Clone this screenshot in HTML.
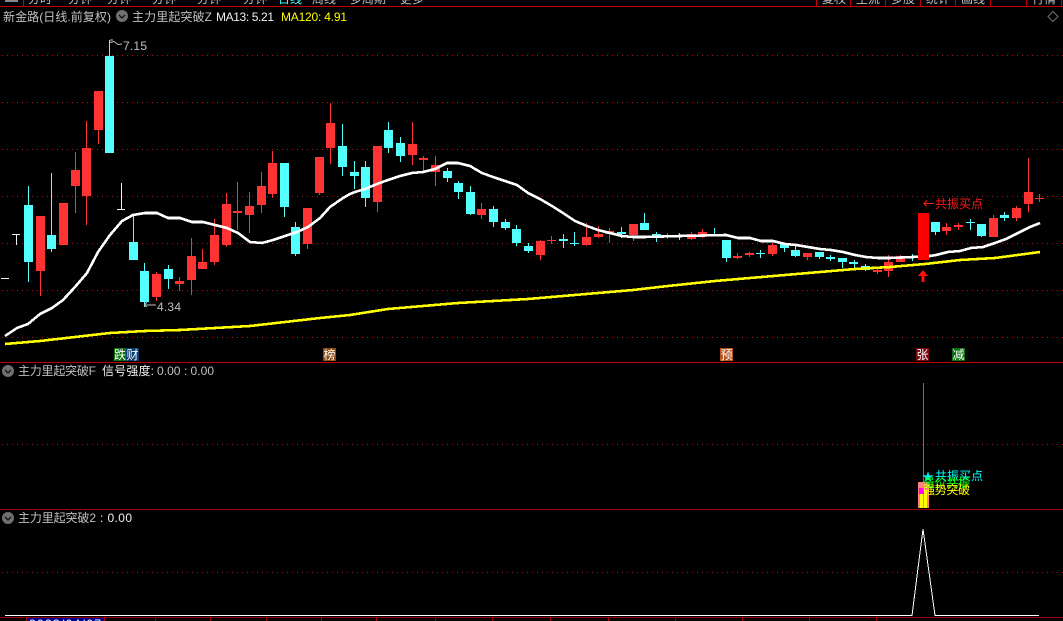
<!DOCTYPE html>
<html><head><meta charset="utf-8"><style>
html,body{margin:0;padding:0;background:#000;width:1063px;height:621px;overflow:hidden}
svg{display:block}
text{font-family:"Liberation Sans","WenQuanYi Zen Hei","Noto Sans CJK SC",sans-serif;font-size:12px}
</style></head><body>
<svg width="1063" height="621" viewBox="0 0 1063 621" xmlns="http://www.w3.org/2000/svg">
<rect width="1063" height="621" fill="#000"/>
<g font-size="12" fill="#c0c0c0">
<text x="28" y="3">分时</text><text x="68" y="3">分钟</text><text x="107" y="3">分钟</text><text x="152" y="3">分钟</text><text x="197" y="3">分钟</text><text x="243" y="3">分钟</text><text x="278" y="3" fill="#54ffff">日线</text><text x="312" y="3">周线</text><text x="350" y="3">多周期</text><text x="400" y="3">更多</text>
<text x="822" y="3">复权</text><text x="856" y="3">主流</text><text x="891" y="3">多股</text><text x="926" y="3">统计</text><text x="961" y="3">画线</text><text x="1032" y="3">行情</text>
</g>
<rect x="5" y="0" width="13" height="2" fill="#888"/>
<g shape-rendering="crispEdges" fill="#c00000">
<rect x="0" y="6" width="1063" height="1"/><rect x="23" y="0" width="1" height="6"/>
<rect x="816" y="0" width="1" height="6"/><rect x="850" y="0" width="1" height="6"/><rect x="885" y="0" width="1" height="6"/><rect x="920" y="0" width="1" height="6"/><rect x="955" y="0" width="1" height="6"/><rect x="990" y="0" width="1" height="6"/><rect x="1026" y="0" width="1" height="6"/><rect x="1061" y="0" width="1" height="6"/>
<rect x="0" y="362" width="1063" height="1"/>
<rect x="0" y="509" width="1063" height="1" fill="#a00000"/>
<rect x="0" y="617" width="1063" height="1" fill="#a00000"/>
</g>
<path d="M2 55.5H1063M2 102.5H1063M2 149.5H1063M2 196.5H1063M2 243.5H1063M2 290.5H1063M2 337.5H1063M2 444.5H1063M2 572.5H1063" stroke="#b01515" stroke-width="1" stroke-dasharray="1 4" fill="none" shape-rendering="crispEdges"/>

<!-- doji whites -->
<path d="M1 278.5H9M16.5 234V245M12 234.5H20M121.5 183V209M117 209.5H125" stroke="#f0f0f0" fill="none" shape-rendering="crispEdges"/>

<!-- wicks red -->
<path stroke="#ff3333" fill="none" shape-rendering="crispEdges" d="M40.5 216V296M75.5 152V213M86.5 121V225M98.5 91V144M156.5 272V301M179.5 277V291M191.5 238V295M202.5 249V262M214.5 219V265M226.5 193V247M237.5 182V230M249.5 192V233M261.5 172V213M272.5 151V198M307.5 208V249M319.5 157V195M330.5 103V164M377.5 146V212M412.5 122V165M423.5 156V171M435.5 156V186M481.5 203V219M540.5 240V260M551.5 236V244M586.5 223V246M598.5 226V238M609.5 228V243M633.5 224V241M667.5 233V239M691.5 232V240M702.5 229V238M737.5 253V259M749.5 252V257M772.5 243V256M807.5 253V260M877.5 268V274M888.5 255V277M900.5 255V262M946.5 223V235M958.5 223V230M993.5 215V237M1016.5 206V221M1028.5 158V212M1039.5 194V202"/>
<!-- bodies red -->
<path fill="#ff3333" shape-rendering="crispEdges" d="M36 216h9v55h-9zM59 203h9v42h-9zM71 170h9v16h-9zM82 148h9v48h-9zM94 91h9v39h-9zM152 274h9v23h-9zM175 281h9v3h-9zM187 256h9v24h-9zM198 262h9v7h-9zM210 235h9v27h-9zM222 204h9v41h-9zM233 211h9v2h-9zM245 206h9v9h-9zM257 186h9v19h-9zM268 163h9v31h-9zM303 208h9v36h-9zM315 157h9v36h-9zM326 123h9v25h-9zM373 146h9v56h-9zM408 144h9v11h-9zM419 158h9v2h-9zM431 165h9v7h-9zM477 209h9v6h-9zM536 241h9v14h-9zM547 240h9v1h-9zM582 237h9v8h-9zM594 234h9v3h-9zM605 231h9v3h-9zM629 224h9v11h-9zM663 235h9v1h-9zM687 234h9v5h-9zM698 232h9v5h-9zM733 256h9v2h-9zM745 253h9v2h-9zM768 245h9v9h-9zM803 253h9v4h-9zM873 270h9v2h-9zM884 262h9v9h-9zM896 256h9v6h-9zM942 227h9v4h-9zM954 225h9v2h-9zM989 218h9v19h-9zM1012 208h9v10h-9zM1024 192h9v12h-9zM1035 198h9v1h-9z"/>
<!-- wicks cyan -->
<path stroke="#54ffff" fill="none" shape-rendering="crispEdges" d="M28.5 186V282M51.5 173V252M109.5 40V153M133.5 216V260M144.5 263V307M168.5 265V289M284.5 163V217M295.5 222V256M342.5 124V176M354.5 161V189M365.5 161V207M388.5 122V153M400.5 137V162M447.5 168V182M458.5 181V199M470.5 186V215M493.5 206V227M505.5 219V230M516.5 225V246M528.5 243V253M563.5 234V248M574.5 232V246M621.5 227V238M644.5 213V230M656.5 232V242M679.5 233V240M714.5 228V235M726.5 240V262M760.5 250V258M784.5 244V252M795.5 245V257M819.5 252V259M830.5 255V261M842.5 258V268M854.5 260V268M865.5 264V271M912.5 254V261M935.5 222V235M970.5 219V230M981.5 224V237M1004.5 212V221"/>
<!-- bodies cyan -->
<path fill="#54ffff" shape-rendering="crispEdges" d="M24 205h9v57h-9zM47 235h9v14h-9zM105 56h9v97h-9zM129 242h9v18h-9zM140 271h9v31h-9zM164 269h9v10h-9zM280 163h9v44h-9zM291 227h9v27h-9zM338 146h9v21h-9zM350 172h9v4h-9zM361 167h9v31h-9zM384 130h9v18h-9zM396 143h9v13h-9zM443 171h9v7h-9zM454 183h9v9h-9zM466 192h9v22h-9zM489 209h9v13h-9zM501 222h9v6h-9zM512 229h9v14h-9zM524 246h9v5h-9zM559 239h9v2h-9zM570 243h9v1h-9zM617 232h9v2h-9zM640 223h9v7h-9zM652 234h9v3h-9zM675 236h9v1h-9zM710 234h9v1h-9zM722 240h9v18h-9zM756 253h9v1h-9zM780 244h9v4h-9zM791 250h9v6h-9zM815 252h9v5h-9zM826 257h9v2h-9zM838 258h9v4h-9zM849 262h9v2h-9zM861 266h9v4h-9zM908 256h9v2h-9zM931 222h9v10h-9zM966 222h9v1h-9zM977 224h9v12h-9zM1000 215h9v3h-9z"/>

<!-- MA120 -->
<polyline fill="none" stroke="#ffff00" stroke-width="2.6" shape-rendering="crispEdges" points="5,344 40,341 75,337 110,333 145,331 180,330 215,328 250,326 285,322 320,318 350,315 388,309 423,306 458,303 493,301 528,299 563,296 598,293 633,290 668,286 715,281 750,278 785,275 820,272 855,269 890,267 925,264 960,260 995,258 1040,252"/>
<!-- MA13 -->
<polyline fill="none" stroke="#ffffff" stroke-width="2.6" shape-rendering="crispEdges" points="5,336 17,328 28,324 40,314 52,308 63,300 75,287 87,273 98,252 110,235 122,221 133,215 145,213 157,213 168,218 180,218 192,222 203,222 215,225 227,228 238,233 250,242 262,243 273,240 285,236 297,232 308,227 320,218 330,207 343,198 350,194 355,192 365,189 377,184 388,180 400,176 412,173 423,172 435,169 447,163 458,163 470,166 482,173 493,177 505,181 517,185 528,193 540,199 552,206 563,213 575,221 587,226 598,230 610,233 622,236 633,237 645,237 680,236 726,235 738,238 750,238 761,241 773,241 785,244 796,245 808,247 820,249 831,250 843,252 855,255 866,257 878,258 890,258 913,257 930,256 936,255 948,252 960,251 971,248 983,247 995,243 1006,239 1018,233 1030,227 1040,223"/>
<rect x="918" y="213" width="11" height="47" fill="#ff0000" shape-rendering="crispEdges"/>

<!-- buy arrow -->
<path d="M923 270l5 6h-3.500v6h-3v-6H918z" fill="#ff1010" shape-rendering="crispEdges"/>
<path d="M924 203.500H934M927 200.500L924 203.500 927 206.500" stroke="#ff1a1a" fill="none" shape-rendering="crispEdges"/>
<text x="935" y="208" fill="#ff1a1a" textLength="48" lengthAdjust="spacing">共振买点</text>

<!-- tags -->
<g shape-rendering="crispEdges">
<rect x="114" y="348" width="12" height="13" fill="#0a7010"/><rect x="126" y="348" width="13" height="13" fill="#0a3c70"/>
<rect x="323" y="348" width="13" height="13" fill="#8a4a10"/><rect x="720" y="348" width="13" height="13" fill="#b8501a"/>
<rect x="916" y="348" width="13" height="13" fill="#7a0a10"/><rect x="952" y="348" width="13" height="13" fill="#0a7010"/>
</g>
<g fill="#fff" font-size="12">
<text x="114" y="359">跌</text><text x="126.500" y="359">财</text><text x="323.500" y="359">榜</text><text x="720.500" y="359">预</text><text x="916.500" y="359">张</text><text x="952.500" y="359">减</text>
</g>

<!-- head row -->
<text x="3" y="21" fill="#c0c0c0" font-size="13" textLength="108" lengthAdjust="spacing">新金路(日线.前复权)</text>
<circle cx="122" cy="16" r="6" fill="#707070"/><path d="M119 15l3 3 3-3" stroke="#111" stroke-width="1.300" fill="none"/>
<text x="132" y="21" fill="#c0c0c0" textLength="80" lengthAdjust="spacing">主力里起突破Z</text>
<text x="216" y="21" fill="#f0f0f0" textLength="58" lengthAdjust="spacing">MA13: 5.21</text>
<text x="281" y="21" fill="#ffff00" textLength="66" lengthAdjust="spacing">MA120: 4.91</text>
<path d="M1053 11.500l5 5-5 5-5-5z" fill="none" stroke="#707070"/>

<!-- hi/lo -->
<path d="M110 40h3M110 42.500l4-1 4 3 4-.5" stroke="#c0c0c0" fill="none"/>
<text x="123" y="50" fill="#c0c0c0" textLength="24" lengthAdjust="spacing">7.15</text>
<path d="M144 305l3-3M144 305l3 2M144 305h12" stroke="#c0c0c0" fill="none"/>
<text x="157" y="311" fill="#c0c0c0" textLength="24" lengthAdjust="spacing">4.34</text>

<!-- panel 2 -->
<circle cx="8" cy="371" r="6" fill="#707070"/><path d="M5 370l3 3 3-3" stroke="#111" stroke-width="1.300" fill="none"/>
<text x="18" y="375" fill="#c0c0c0" textLength="78" lengthAdjust="spacing">主力里起突破F</text>
<text x="102" y="375" fill="#f0f0f0" textLength="52" lengthAdjust="spacing">信号强度:</text>
<text x="157" y="375" fill="#c0c0c0" textLength="57" lengthAdjust="spacing">0.00 : 0.00</text>
<rect x="923" y="383" width="1" height="100" fill="#ff3333" shape-rendering="crispEdges"/>
<g shape-rendering="crispEdges">
<rect x="918" y="482" width="11" height="26" fill="#ff8080"/>
<rect x="919" y="488" width="5" height="6" fill="#ff00ff"/>
<rect x="920" y="494" width="3" height="14" fill="#ffff00"/><rect x="924" y="490" width="3" height="18" fill="#ffff00"/>
</g>
<text x="922" y="481" fill="#00f0f0" font-size="14">★</text>
<text x="935" y="480" fill="#00ffff" textLength="48" lengthAdjust="spacing">共振买点</text>
<text x="923" y="487" fill="#00ff00" textLength="47" lengthAdjust="spacing">量价共振</text>
<text x="923" y="494" fill="#ffff00" textLength="47" lengthAdjust="spacing">强势突破</text>

<!-- panel 3 -->
<circle cx="8" cy="518" r="6" fill="#707070"/><path d="M5 517l3 3 3-3" stroke="#111" stroke-width="1.300" fill="none"/>
<text x="18" y="522" fill="#c0c0c0" textLength="78" lengthAdjust="spacing">主力里起突破2</text>
<text x="100" y="522" fill="#f0f0f0" textLength="32" lengthAdjust="spacing">: 0.00</text>
<path d="M5 615.500H912L923 529 935 615.500H1039" stroke="#fff" stroke-width="1" fill="none" shape-rendering="crispEdges"/>

<!-- bottom axis -->
<rect x="26" y="618" width="79" height="3" fill="#000090"/>
<text x="29" y="628" fill="#fff" textLength="72" lengthAdjust="spacing">2023/04/07</text>
<path d="M26.500 617V621M104.500 617V621M155.500 618V621M210.500 618V621M266.500 618V621M321.500 618V621M376.500 618V621M435.500 618V621M492.500 618V621M550.500 618V621M608.500 618V621M675.500 618V621M742.500 618V621M809.500 618V621M876.500 617V621" stroke="#b00000" fill="none" shape-rendering="crispEdges"/>
</svg>
</body></html>
